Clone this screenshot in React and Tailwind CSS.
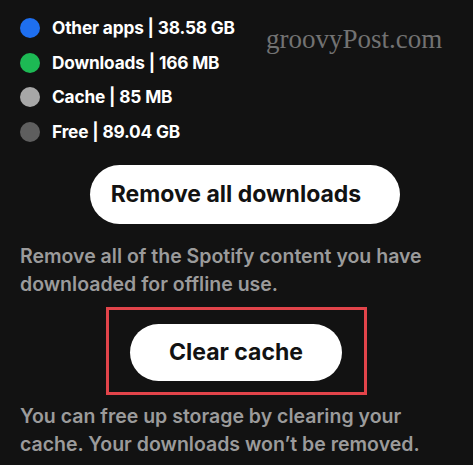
import React from "react";

const legend = [
  { color: "bg-[#1e6ff0]", label: "Other apps | 38.58 GB" },
  { color: "bg-[#1db954]", label: "Downloads | 166 MB" },
  { color: "bg-[#a7a7a7]", label: "Cache | 85 MB" },
  { color: "bg-[#5e5e5e]", label: "Free | 89.04 GB" },
];

export default function App() {
  return (
    <div
      className="relative h-[465px] w-[473px] overflow-hidden bg-[#121212] text-white"
      style={{ fontFamily: "Inter, 'Noto Sans', sans-serif" }}
    >
      <div
        className="absolute left-[266px] top-[26px] text-[27px] leading-none text-[#727272]"
        style={{ fontFamily: "'Liberation Serif', serif" }}
      >
        groovyPost.com
      </div>

      <div className="flex flex-col gap-[14.5px] pl-5 pt-[18px]">
        {legend.map((item) => (
          <div key={item.label} className="flex h-[20px] items-center gap-3">
            <span className={`h-5 w-5 rounded-full ${item.color}`} />
            <span className="text-[17.3px] font-bold tracking-[-0.01em]">
              {item.label}
            </span>
          </div>
        ))}
      </div>

      <button className="ml-[90px] mt-[23px] flex h-[59px] w-[310px] items-center justify-center rounded-full bg-white pr-[18px] text-[23px] font-bold text-[#121212]">
        Remove all downloads
      </button>

      <p className="mt-[18px] pl-5 pr-8 text-[19.5px] font-semibold leading-[28px] text-[#9b9b9b]">
        Remove all of the Spotify content you have downloaded for offline use.
      </p>

      <div className="ml-[106px] mt-[9px] w-[261px] border-[3px] border-[#e2444a] pb-[11px] pl-[21px] pt-[14px]">
        <button className="flex h-[57px] w-[212px] items-center justify-center rounded-full bg-white text-[23px] font-bold text-[#121212]">
          Clear cache
        </button>
      </div>

      <p className="mt-[7px] pl-5 pr-8 text-[19.5px] font-semibold leading-[28px] text-[#9b9b9b]">
        You can free up storage by clearing your cache. Your downloads won’t be removed.
      </p>
    </div>
  );
}
